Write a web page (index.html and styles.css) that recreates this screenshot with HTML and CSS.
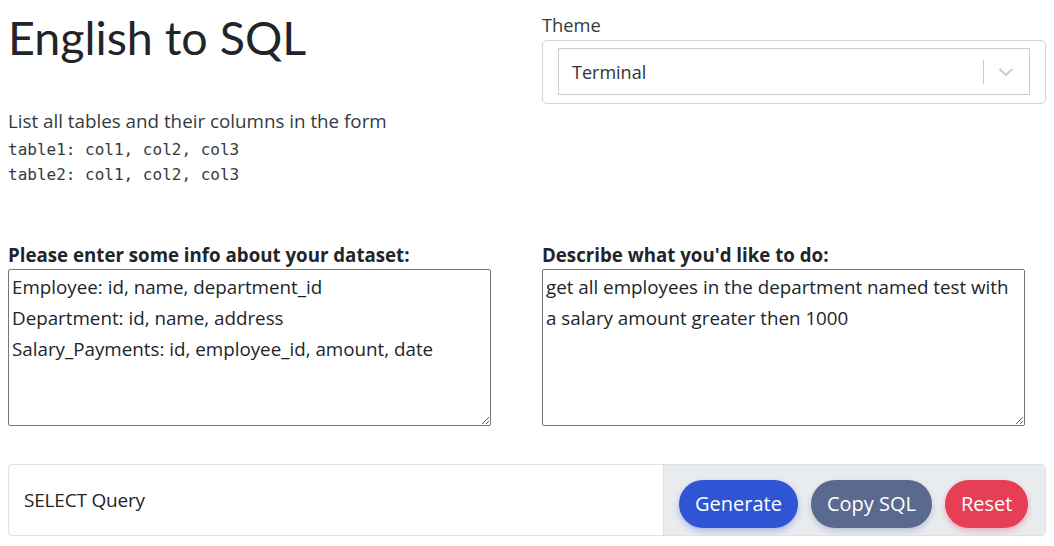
FILE: index.html
```html
<!DOCTYPE html>
<html>
<head>
<meta charset="utf-8">
<link rel="stylesheet" href="styles.css">
</head>
<body>
<div class="page">
  <div class="row top">
    <div class="col">
      <h1 class="title">English to SQL</h1>
      <p class="hint">List all tables and their columns in the form</p>
      <div class="code first">table1: col1, col2, col3</div>
      <div class="code">table2: col1, col2, col3</div>
    </div>
    <div class="col">
      <div class="theme-label">Theme</div>
      <div class="theme-box">
        <div class="select">
          <span class="select-value">Terminal</span>
          <span class="select-ind">
            <span class="sep"></span>
            <svg width="20" height="20" viewBox="0 0 20 20"><path d="M3.5 7 L10 13 L16.5 7" fill="none" stroke="#cccccc" stroke-width="2"/></svg>
          </span>
        </div>
      </div>
    </div>
  </div>
  <div class="row mid">
    <div class="col">
      <label class="field-label">Please enter some info about your dataset:</label>
      <textarea class="ta">Employee: id, name, department_id
Department: id, name, address
Salary_Payments: id, employee_id, amount, date</textarea>
    </div>
    <div class="col">
      <label class="field-label">Describe what you'd like to do:</label>
      <textarea class="ta">get all employees in the department named test with a salary amount greater then 1000</textarea>
    </div>
  </div>
  <div class="group">
    <div class="query">SELECT Query</div>
    <div class="actions">
      <button class="btn btn-primary">Generate</button>
      <button class="btn btn-secondary">Copy SQL</button>
      <button class="btn btn-danger">Reset</button>
    </div>
  </div>
</div>
</body>
</html>
```
FILE: styles.css
```css
* { box-sizing: border-box; }
body {
  margin: 0;
  background: #ffffff;
  color: #212529;
  font-family: "Lato", "Open Sans", sans-serif;
}
.page {
  padding: 0 8px;
}
.row {
  display: grid;
  grid-template-columns: 1fr 1fr;
  column-gap: 30px;
}
.title {
  margin: 8px 0 0 0;
  font-weight: 400;
  font-size: 46.6px;
  line-height: 58px;
  color: #212529;
}
.hint {
  margin: 43px 0 0 0;
  font-family: "Open Sans", sans-serif;
  font-size: 18.8px;
  line-height: 25px;
  color: #343a40;
}
.code {
  font-family: "DejaVu Sans Mono", monospace;
  font-size: 16px;
  line-height: 25px;
  color: #343a40;
}
.code.first {
  margin-top: 3px;
}
.theme-label {
  margin-top: 13px;
  font-family: "Open Sans", sans-serif;
  font-size: 18.3px;
  line-height: 24px;
  color: #343a40;
}
.theme-box {
  margin-top: 3px;
  border: 1px solid #ced4da;
  border-radius: 5px;
  padding: 7px 15px 8px 15px;
}
.select {
  display: flex;
  align-items: center;
  justify-content: space-between;
  height: 47px;
  border: 1px solid #cccccc;
  padding: 0 13px 0 13px;
  background: #fff;
}
.select-value {
  font-family: "Open Sans", sans-serif;
  font-size: 18px;
  color: #333;
}
.select-ind {
  display: flex;
  align-items: center;
  gap: 12px;
}
.sep {
  width: 1px;
  height: 24px;
  background: #cccccc;
}
.mid {
  margin-top: 56px;
}
.field-label {
  display: block;
  margin-bottom: 2px;
  font-family: "Open Sans", sans-serif;
  font-weight: 700;
  font-size: 18.7px;
  line-height: 24px;
  color: #212529;
}
.ta {
  display: block;
  width: 483px;
  height: 157px;
  border: 1px solid #767676;
  border-radius: 2px;
  padding: 2px 3px;
  font-family: "Open Sans", sans-serif;
  font-size: 18.8px;
  line-height: 31px;
  color: #212529;
  resize: vertical;
  margin-top: 0;
}
.group {
  display: flex;
  margin-top: 38px;
  height: 72px;
  border: 1px solid #dee2e6;
  border-radius: 4px;
}
.query {
  flex: 1;
  display: flex;
  align-items: center;
  padding-left: 15px;
  font-family: "Open Sans", sans-serif;
  font-size: 19px;
  color: #212529;
  letter-spacing: -0.2px;
  border-right: 1px solid #dee2e6;
}
.actions {
  width: 381px;
  display: flex;
  align-items: center;
  gap: 13px;
  padding: 7px 15px 0 15px;
  background: #e9ecef;
  border-radius: 0 4px 4px 0;
}
.btn {
  height: 48px;
  border: none;
  border-radius: 24px;
  padding: 0 16px;
  font-family: "Open Sans", sans-serif;
  font-size: 20px;
  color: #ffffff;
}
.btn-primary { background: #2f55d4; box-shadow: 0 3px 6px rgba(47,85,212,0.35); }
.btn-secondary { background: #5a6a8e; box-shadow: 0 3px 6px rgba(90,106,142,0.3); }
.btn-danger { background: #e63e54; box-shadow: 0 3px 6px rgba(230,62,84,0.35); }
```
